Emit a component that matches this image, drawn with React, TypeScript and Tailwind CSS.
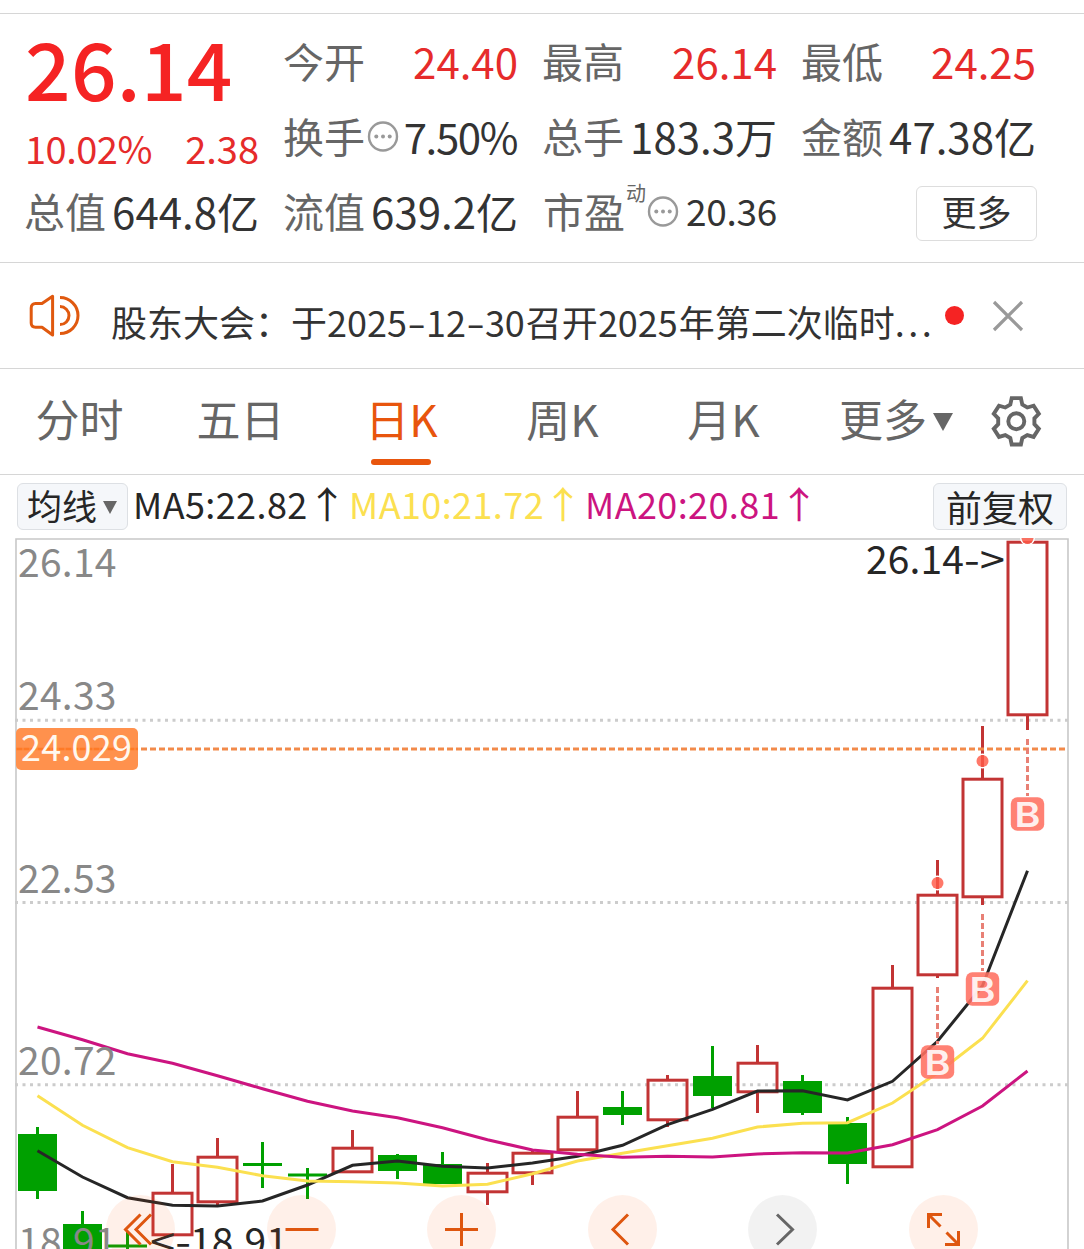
import { ReactNode } from "react";
import clsx from "clsx";

const RED = "#c23434";
const GREEN = "#00a000";

// [kind, high, body top, body bottom, low] in chart coordinates
type Candle = ["up" | "down", number, number, number, number];

const candles: Candle[] = [
  ["down", 1127, 1134, 1191, 1199],
  ["down", 1211, 1224, 1262, 1262],
  ["down", 1232, 1244.5, 1247.5, 1262],
  ["up", 1164, 1192, 1236, 1236],
  ["up", 1138, 1156, 1203, 1205],
  ["down", 1142, 1163, 1166, 1188],
  ["down", 1168, 1173.5, 1176.5, 1199],
  ["up", 1130, 1147, 1173, 1173],
  ["down", 1154, 1155, 1171, 1179],
  ["down", 1152, 1164, 1184, 1184],
  ["up", 1163, 1172, 1193, 1205],
  ["up", 1151, 1152, 1174, 1185],
  ["up", 1091, 1116, 1151, 1151],
  ["down", 1091, 1107, 1115, 1125],
  ["up", 1075, 1079, 1121, 1127],
  ["down", 1046, 1076, 1096, 1108],
  ["up", 1045, 1062, 1093, 1113],
  ["down", 1075, 1081, 1113, 1115],
  ["down", 1117, 1123, 1164, 1184],
  ["up", 965, 987, 1168, 1168],
  ["up", 860, 894, 976, 978],
  ["up", 726, 778, 898, 905],
  ["up", 541, 541, 716, 730],
];

const ma5 = [
  1150.7, 1177, 1197.7, 1205.3, 1206, 1201, 1185, 1165.3, 1161, 1166.3, 1168, 1163,
  1156.3, 1145.3, 1124.7, 1109.3, 1091, 1090.7, 1100, 1081.3, 1041.3, 985.7, 870.7,
];
const ma10 = [
  1095.7, 1125.3, 1147.7, 1161.7, 1167.3, 1175.7, 1181, 1181.7, 1183, 1186, 1184.3, 1173.7,
  1161, 1153.3, 1145.7, 1138.3, 1127, 1123.3, 1122.7, 1103, 1073, 1038.3, 980.7,
];
const ma20 = [
  1027, 1039.7, 1053.7, 1063.3, 1075.7, 1088.7, 1101.3, 1111, 1117.7, 1127.7, 1139.7, 1150,
  1154.3, 1157.3, 1156.3, 1157, 1154, 1152.7, 1153, 1144.7, 1129.7, 1106, 1071,
];

const axisLabels = [
  { text: "26.14", y: 577 },
  { text: "24.33", y: 710 },
  { text: "22.53", y: 892.5 },
  { text: "20.72", y: 1074.7 },
  { text: "18.91", y: 1256 },
];

const buyMarks = [
  { x: 937.5, from: 987, y: 1062 },
  { x: 982.5, from: 914, y: 989 },
  { x: 1027.5, from: 739, y: 814 },
];

const cx = (i: number) => 37.5 + 45 * i;
const points = (ys: number[]) => ys.map((y, i) => `${cx(i)},${y}`).join(" ");

const InfoDots = ({ className }: { className?: string }) => (
  <svg className={clsx("h-8 w-8 shrink-0", className)} viewBox="0 0 32 32" fill="none">
    <circle cx="16" cy="16.5" r="14" stroke="#999" strokeWidth="2.4" />
    <g fill="#999">
      <circle cx="9.3" cy="16.5" r="2" />
      <circle cx="16" cy="16.5" r="2" />
      <circle cx="22.7" cy="16.5" r="2" />
    </g>
  </svg>
);

const SpeakerIcon = () => (
  <svg className="-mt-[2px] h-[60px] w-[72px] shrink-0" viewBox="0 0 72 60" fill="none" stroke="#e0590f" strokeWidth="3">
    <path d="M32.6 11.3 L22 18.6 H15.5 Q11.2 18.6 11.2 23 V38 Q11.2 42.2 15.5 42.2 H22 L32.6 50 Z" strokeLinejoin="round" />
    <path d="M40 12.6 A18 18 0 0 1 40 48.6" />
    <path d="M40 21.6 A9 9 0 0 1 40 39.6" />
  </svg>
);

const GearIcon = () => (
  <svg className="h-[72px] w-[72px] shrink-0" viewBox="0 0 72 72" fill="none" stroke="#666" strokeWidth="3.9">
    <path d="M31.7 13.1 H40.9 L42.3 19.6 L47.3 22.5 L53.6 20.7 L58.8 28.8 L54.4 33.4 V39.2 L58.8 43.8 L53.6 51.9 L47.3 50.1 L42.3 53 L40.9 59.5 H31.7 L30.3 53 L25.3 50.1 L19 51.9 L13.8 43.8 L18.2 39.2 V33.4 L13.8 28.8 L19 20.7 L25.3 22.5 L30.3 19.6 Z" />
    <circle cx="36.3" cy="36.3" r="8" />
  </svg>
);

const Quote = ({
  label,
  value,
  red,
}: {
  label: string;
  value: string;
  red?: boolean;
}) => (
  <div className="flex items-center justify-between">
    <span className="-ml-px text-[41px] text-[#666]">{label}</span>
    <span className={clsx("-mr-px text-[42px]", red ? "text-[#e62b2b]" : "text-[#333]")}>{value}</span>
  </div>
);

const Summary = () => (
  <section className="mt-[13px] grid h-[250px] grid-cols-[233px_233px_233px_233px] grid-rows-[75px_75px_75px] gap-x-[26px] border-y border-[#d6d6d6] pt-[9px] pl-[25px] leading-[75px] whitespace-nowrap">
    <div className="row-span-2 flex flex-col text-[#e62b2b]">
      <div className="text-[80px] font-medium leading-[87px] tracking-[0.3px] text-[#f52323]">26.14</div>
      <div className="-mr-px flex justify-between pt-[9px] text-[38px] leading-[58px]">
        <span className="tracking-[-0.5px]">10.02%</span>
        <span>2.38</span>
      </div>
    </div>
    <Quote label="今开" value="24.40" red />
    <Quote label="最高" value="26.14" red />
    <Quote label="最低" value="24.25" red />
    <div className="flex items-center justify-between">
      <div className="flex items-center">
        <span className="-ml-px text-[41px] text-[#666]">换手</span>
        <InfoDots className="ml-[2px]" />
      </div>
      <span className="text-[42px] tracking-[-1.4px] text-[#333]">7.50%</span>
    </div>
    <Quote label="总手" value="183.3万" />
    <Quote label="金额" value="47.38亿" />
    <Quote label="总值" value="644.8亿" />
    <Quote label="流值" value="639.2亿" />
    <div className="flex items-center justify-between">
      <div className="flex items-center">
        <span className="text-[41px] text-[#666]">市盈</span>
        <span className="-mt-[37px] ml-[1px] text-[20px] text-[#666]">动</span>
        <InfoDots className="ml-[1px]" />
      </div>
      <span className="-mr-px text-[37px] tracking-[-0.3px] text-[#333]">20.36</span>
    </div>
    <div className="flex items-center justify-end">
      <button className="mt-[6px] mr-[-2px] h-[55px] w-[121px] rounded-md border-[1.5px] border-[#ddd] pb-[5px] text-[35px] leading-[48px] text-[#333]">
        更多
      </button>
    </div>
  </section>
);

const Dash = () => <span className="inline-block w-[19px] scale-x-150 text-center">-</span>;

const Notice = () => (
  <section className="flex h-[106px] items-center border-b border-[#d6d6d6] pl-5 whitespace-nowrap">
    <SpeakerIcon />
    <p className="ml-[19px] w-[834px] pt-[10px] text-[36px] leading-[52px] text-[#333]">
      股东大会：于2025<Dash />12<Dash />30<span className="ml-px">召开</span>2025<span className="ml-px">年第二次临时</span>
      <span className="tracking-[3.4px]">...</span>
    </p>
    <span className="h-[19px] w-[19px] shrink-0 rounded-full bg-[#f52323]" />
    <svg className="ml-[28px] h-8 w-8" viewBox="0 0 32 32" stroke="#999" strokeWidth="3.2">
      <path d="M2 2 L30 30 M30 2 L2 30" />
    </svg>
  </section>
);

const tabs = ["分时", "五日", "日K", "周K", "月K"];

const Tabs = () => (
  <nav className="flex h-[106px] border-b border-[#d6d6d6] text-[44px] leading-[64px] whitespace-nowrap text-[#666]">
    {tabs.map((tab) => (
      <div
        key={tab}
        className={clsx(
          "-ml-px flex w-[162px] flex-col items-center pt-[17px] pr-[1px]",
          tab === "日K" && "text-[#e8550d]",
        )}
      >
        <span>{tab}</span>
        {tab === "日K" && <span className="mt-[9px] mr-[2px] h-[6px] w-[60px] rounded-full bg-[#e8550d]" />}
      </div>
    ))}
    <div className="ml-[34px] flex h-[98px] items-center">
      <span>更多</span>
      <svg className="mt-[7px] ml-[6px] h-[18px] w-5" viewBox="0 0 20 18">
        <path d="M0 0 H20 L10 18 Z" fill="#666" />
      </svg>
    </div>
    <div className="mt-[16px] ml-[27px]">
      <GearIcon />
    </div>
  </nav>
);

const Arrow = () => (
  <span className="mt-[1px] inline-block w-[38px] scale-x-110 text-center text-[37px] tracking-normal">↑</span>
);

const Averages = () => (
  <div className="flex h-[63px] items-center pr-[17px] pl-[17px] text-[36px] leading-[44px] whitespace-nowrap text-[#262626]">
    <button className="flex h-[47px] w-[111px] items-center rounded-md border-[1.5px] border-[#dde0e4] bg-[#f5f7fa] pb-[4px] pl-[9px]">
      <span className="text-[35px]">均线</span>
      <svg className="mt-[6px] ml-[6px] h-[13px] w-[14px]" viewBox="0 0 14 13">
        <path d="M0 0 H14 L7 13 Z" fill="#666" />
      </svg>
    </button>
    <div className="ml-[5px] flex h-[44px] pb-[8px] tracking-[0.4px]">
      <span className="flex w-[216px] items-center">MA5:22.82<Arrow /></span>
      <span className="flex w-[236px] items-center text-[#fbe050]">MA10:21.72<Arrow /></span>
      <span className="flex items-center text-[#cc1480]">MA20:20.81<Arrow /></span>
    </div>
    <button className="ml-auto h-[47px] w-[134px] rounded-md border-[1.5px] border-[#dde0e4] bg-[#f5f7fa] pb-[7px]">
      前复权
    </button>
  </div>
);

const KLine = () => (
  <svg className="block h-[711px] w-[1084px]" viewBox="0 538 1084 711" fill="none">
    <path d="M16 1260 V539 H1068 V1260" stroke="#c8c8c8" strokeWidth="1.6" />
    {[720.3, 902.5, 1084.7].map((y) => (
      <path key={y} d={`M15 ${y} H1068`} stroke="#ccc" strokeWidth="3" strokeDasharray="3 4.5" />
    ))}

    {candles.map(([kind, high, top, bottom, low], i) =>
      kind === "down" ? (
        <g key={i} fill={GREEN}>
          <rect x={cx(i) - 1.5} y={high} width="3" height={low - high} />
          <rect x={cx(i) - 19.5} y={top} width="39" height={bottom - top} />
        </g>
      ) : (
        <g key={i} stroke={RED}>
          <path d={`M${cx(i)} ${high} V${top} M${cx(i)} ${bottom} V${low}`} strokeWidth="3" />
          <rect x={cx(i) - 19.5} y={top + 1.2} width="39" height={bottom - top - 2.4} strokeWidth="3" />
        </g>
      ),
    )}

    <g strokeWidth="3">
      <polyline points={points(ma5)} stroke="#262626" />
      <polyline points={points(ma10)} stroke="#fbe050" />
      <polyline points={points(ma20)} stroke="#cc1480" />
    </g>

    <g fontSize="39" fill="#888">
      {axisLabels.map(({ text, y }) => (
        <text key={text} x="18" y={y} textLength="98.5">
          {text}
        </text>
      ))}
    </g>

    <g fontSize="39" fill="#262626">
      <text x="866" y="574" textLength="98">26.14</text>
      <text x="964" y="574" textLength="41" lengthAdjust="spacingAndGlyphs">{"->"}</text>
      <text x="150" y="1256" textLength="41" lengthAdjust="spacingAndGlyphs">{"<-"}</text>
      <text x="190" y="1256" textLength="98">18.91</text>
    </g>

    <rect x="16" y="728" width="122" height="42" rx="5" fill="#ff914d" />
    <path d="M141 749 H1066" stroke="#f28a4a" strokeWidth="3" strokeDasharray="6 3" />
    <path d="M16.5 749 H138" stroke="#ff7a26" strokeWidth="2.6" strokeDasharray="6 1" />
    <text x="21" y="761" fontSize="36" textLength="111" fill="#fff8ef">
      24.029
    </text>

    {buyMarks.map(({ x, from, y }) => (
      <g key={x}>
        <path d={`M${x} ${from} V${y - 18}`} stroke="#e88075" strokeWidth="3" strokeDasharray="6 3" />
        <rect x={x - 16.7} y={y - 16.7} width="33.4" height="33.4" rx="6.5" fill="#ff6f61" fillOpacity="0.88" />
        <text
          x={x - 13}
          y={y + 12.7}
          fontFamily="Inter, sans-serif"
          fontSize="34"
          fontWeight="600"
          textLength="26"
          lengthAdjust="spacingAndGlyphs"
          fill="#fff"
          fillOpacity="0.9"
        >
          B
        </text>
      </g>
    ))}
    {[[937.5, 883], [982.5, 761], [1027.5, 538]].map(([x, y]) => (
      <g key={x}>
        <circle cx={x} cy={y} r="6.7" stroke="#fff" strokeWidth="1.5" />
        <circle cx={x} cy={y} r="6" fill="#ff5a48" fillOpacity="0.82" />
      </g>
    ))}
  </svg>
);

const ToolButton = ({ gray, children }: { gray?: boolean; children: ReactNode }) => (
  <button className={clsx("h-[69px] w-[69px] rounded-full", gray ? "bg-black/5" : "bg-[#ff5a0d]/9")}>
    <svg
      className="h-[69px] w-[69px]"
      viewBox="0 0 69 69"
      fill="none"
      stroke={gray ? "#666" : "#de560f"}
      strokeWidth="3"
    >
      {children}
    </svg>
  </button>
);

const Toolbar = () => (
  <div className="absolute top-[657px] left-[106px] flex gap-[91.5px]">
    <ToolButton>
      <path d="M34.5 19.5 L19.5 34.5 L34.5 49.5 M45 19.5 L30 34.5 L45 49.5" />
    </ToolButton>
    <ToolButton>
      <path d="M18.5 34.5 H51.5" />
    </ToolButton>
    <ToolButton>
      <path d="M18 34.5 H51 M34.5 18 V51" />
    </ToolButton>
    <ToolButton>
      <path d="M40 19.5 L25 34.5 L40 49.5" />
    </ToolButton>
    <ToolButton gray>
      <path d="M29 19.5 L44.5 34.5 L29 49.5" />
    </ToolButton>
    <ToolButton>
      <path d="M19.5 33 V19.5 H33 M19.5 19.5 L31.5 31.5 M37.5 37.5 L49.5 49.5 M49.5 36 V49.5 H36" />
    </ToolButton>
  </div>
);

const App = () => {
  return (
    <main className="flex h-[1249px] w-[1084px] flex-col overflow-hidden bg-white font-['Noto_Sans_CJK_SC',sans-serif]">
      <Summary />
      <Notice />
      <Tabs />
      <Averages />
      <div className="relative">
        <KLine />
        <Toolbar />
      </div>
    </main>
  );
};

export default App;
